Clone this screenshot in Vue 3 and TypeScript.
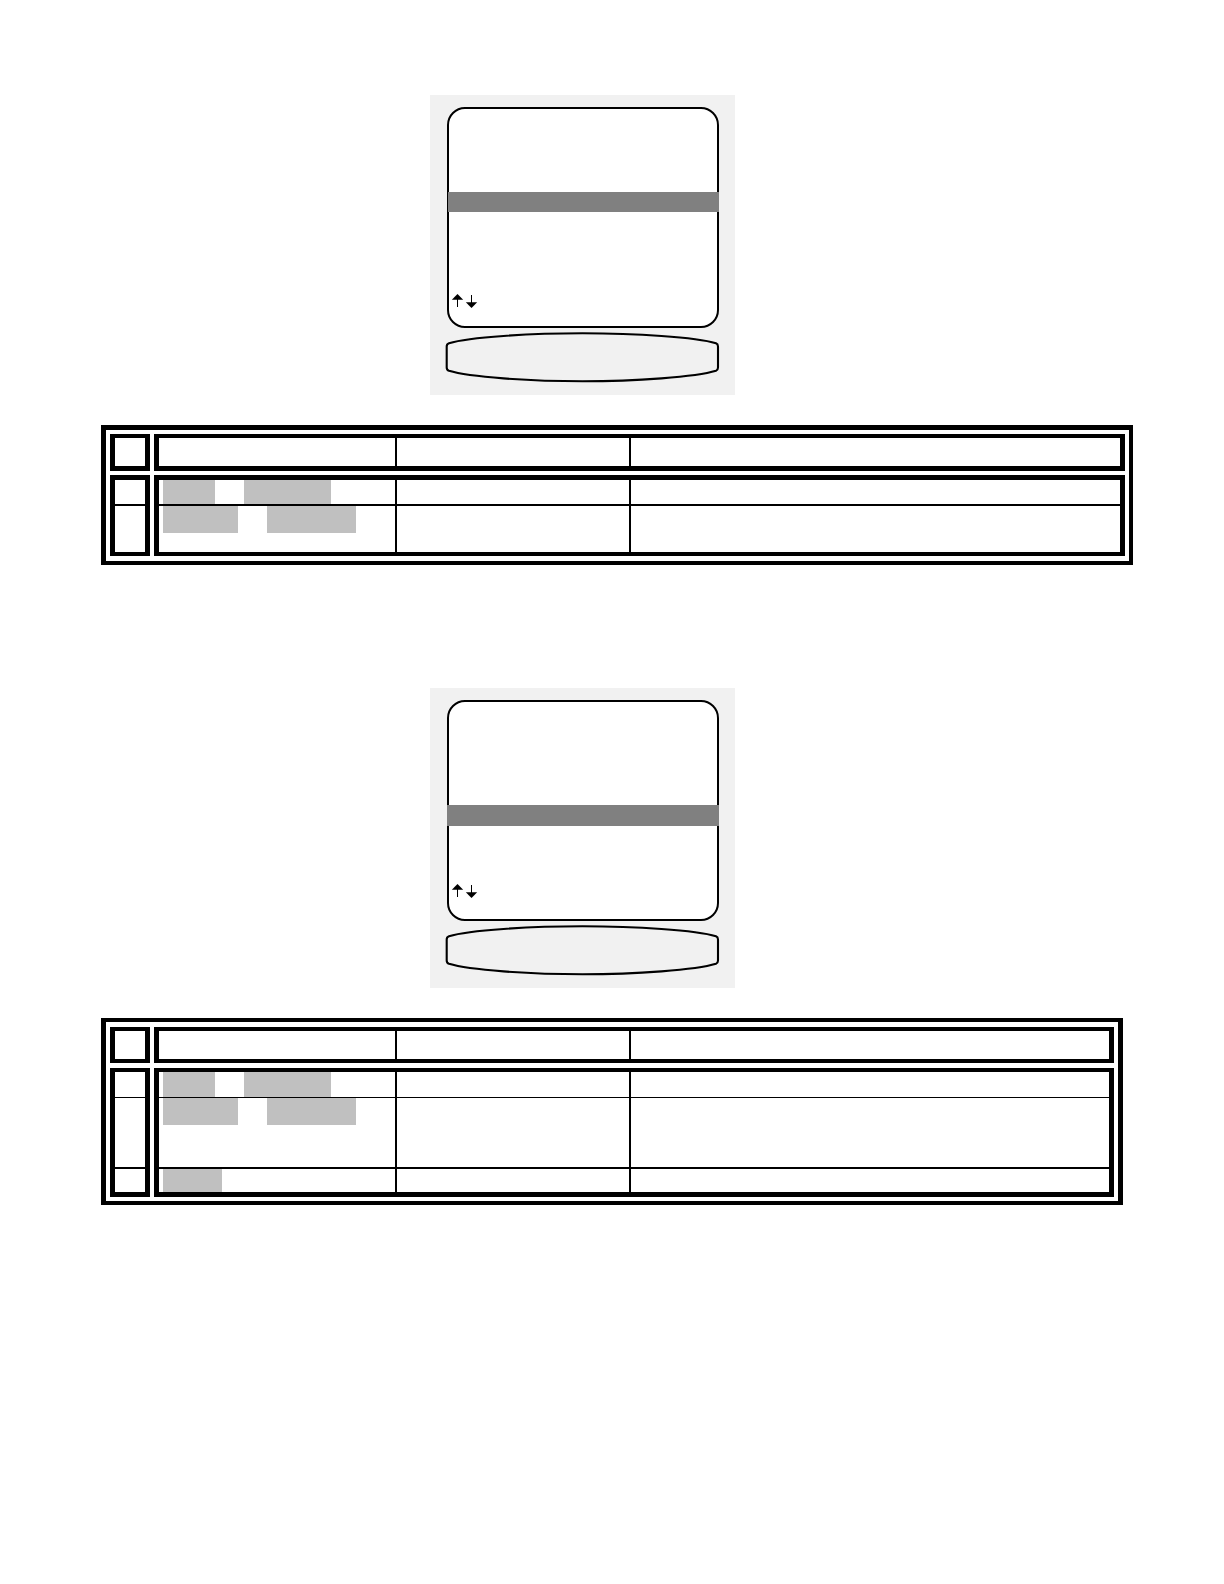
<script setup lang="ts">
interface Row {
  marks: number[][]
  height: number
}
interface Section {
  id: string
  rows: Row[]
}

// Each mark is [space before, width] of a shaded key name.
const keyRow = [[4, 52], [29, 87]]
const levelRow = [[4, 75], [29, 89]]

const sections: Section[] = [
  {
    id: 'first',
    rows: [
      { marks: keyRow, height: 24 },
      { marks: levelRow, height: 46 },
    ],
  },
  {
    id: 'second',
    rows: [
      { marks: keyRow, height: 25 },
      { marks: levelRow, height: 69 },
      { marks: [[4, 59]], height: 23 },
    ],
  },
]
</script>

<template>
  <main class="page">
    <section v-for="s in sections" :key="s.id" class="section" :class="s.id">
      <div class="device">
        <div class="screen">
          <div class="selected"></div>
          <svg class="arrows" width="28" height="14" viewBox="0 0 28 14" aria-hidden="true">
            <path d="M6.5 0 12.200 5.800H.8Z" />
            <path d="M6 5h1v8H6Z" />
            <path d="M20 1h1v8h-1Z" />
            <path d="M14.800 8.200h11.400L20.500 14Z" />
          </svg>
        </div>
        <svg class="lens" width="275" height="53" viewBox="0 0 275 53" aria-hidden="true">
          <path
            d="M1.700 15.500Q1.700 13 4 12.200C24 6 85 2.300 137.500 2.300S251 6 271 12.200Q273 13 273 15.500V36.500Q273 39 271 39.800C251 46 190 50.300 137.500 50.300S24 46 4 39.800Q1.700 39 1.700 36.500Z"
            fill="none"
            stroke="#000"
            stroke-width="2.100"
            stroke-linejoin="round"
          />
        </svg>
      </div>

      <table class="steps">
        <thead>
          <tr class="head">
            <th></th>
            <th></th>
            <th></th>
            <th></th>
          </tr>
        </thead>
        <tbody>
          <tr v-for="(r, i) in s.rows" :key="i">
            <td></td>
            <td :style="{ height: r.height + 'px' }">
              <div class="marks">
                <span
                  v-for="(m, j) in r.marks"
                  :key="j"
                  class="mark"
                  :style="{ marginLeft: m[0] + 'px', width: m[1] + 'px' }"
                ></span>
              </div>
            </td>
            <td></td>
            <td></td>
          </tr>
        </tbody>
      </table>
    </section>
  </main>
</template>

<style>
body {
  margin: 0;
  background: #fff;
}
</style>

<style scoped>
.page {
  display: flex;
  flex-direction: column;
  gap: 123px;
  padding: 95px 91px 0 101px;
  font-family: 'Liberation Sans', Arial, sans-serif;
}
.section {
  --outer-top: 5px;
  --outer-right: 4px;
  --gap-top: 4px;
  --gap-bottom: 5px;
  --gap-mid: 4px;
  --head-bottom: 5px;
  --body-top: 5px;
  --body-bottom: 4px;
  --first-line: 2px;
}
.section.second {
  --outer-top: 4px;
  --outer-right: 5px;
  --gap-top: 5px;
  --gap-bottom: 4px;
  --gap-mid: 5px;
  --head-bottom: 4px;
  --body-top: 4px;
  --body-bottom: 5px;
  --first-line: 1px;
  margin-right: 10px;
}
.device {
  box-sizing: border-box;
  width: 305px;
  height: 300px;
  margin: 0 0 30px 329px;
  padding: 12px 16px 0 17px;
  background: #f1f1f1;
}
.screen {
  box-sizing: border-box;
  display: flex;
  flex-direction: column;
  height: 221px;
  border: 2px solid #000;
  border-radius: 18px;
  background: #fff;
}
.selected {
  height: 20px;
  margin: 83px -2px 82px -1px;
  background: #808080;
}
.second .selected {
  height: 21px;
  margin: 103px -2px 58px -2px;
}
.arrows {
  display: block;
  margin-left: 2px;
}
.lens {
  display: block;
  margin: 3px 0 0 -2px;
}
.steps {
  box-sizing: border-box;
  display: flex;
  flex-direction: column;
  gap: var(--gap-mid);
  border: solid #000;
  border-width: var(--outer-top) var(--outer-right) 4px 5px;
  padding: var(--gap-top) 4px var(--gap-bottom) 4px;
}
thead,
tbody {
  display: block;
}
tr {
  display: grid;
  grid-template-columns: 44px 243px 234px 1fr;
}
th,
td {
  padding: 0;
  border: 0 solid #000;
  border-right-width: 2px;
}
th:first-child,
td:first-child {
  margin-right: 4px;
  border-left-width: 5px;
  border-right-width: 5px;
}
th:nth-child(2),
td:nth-child(2) {
  border-left-width: 5px;
}
th:last-child,
td:last-child {
  border-right-width: 5px;
}
th {
  height: 28px;
  border-top-width: 4px;
  border-bottom-width: var(--head-bottom);
}
td {
  border-bottom-width: 2px;
}
tbody tr:first-child td {
  border-top-width: var(--body-top);
  border-bottom-width: var(--first-line);
}
tbody tr:last-child td {
  border-bottom-width: var(--body-bottom);
}
.marks {
  display: flex;
  height: 100%;
  max-height: 27px;
}
.mark {
  background: #c0c0c0;
}
</style>
